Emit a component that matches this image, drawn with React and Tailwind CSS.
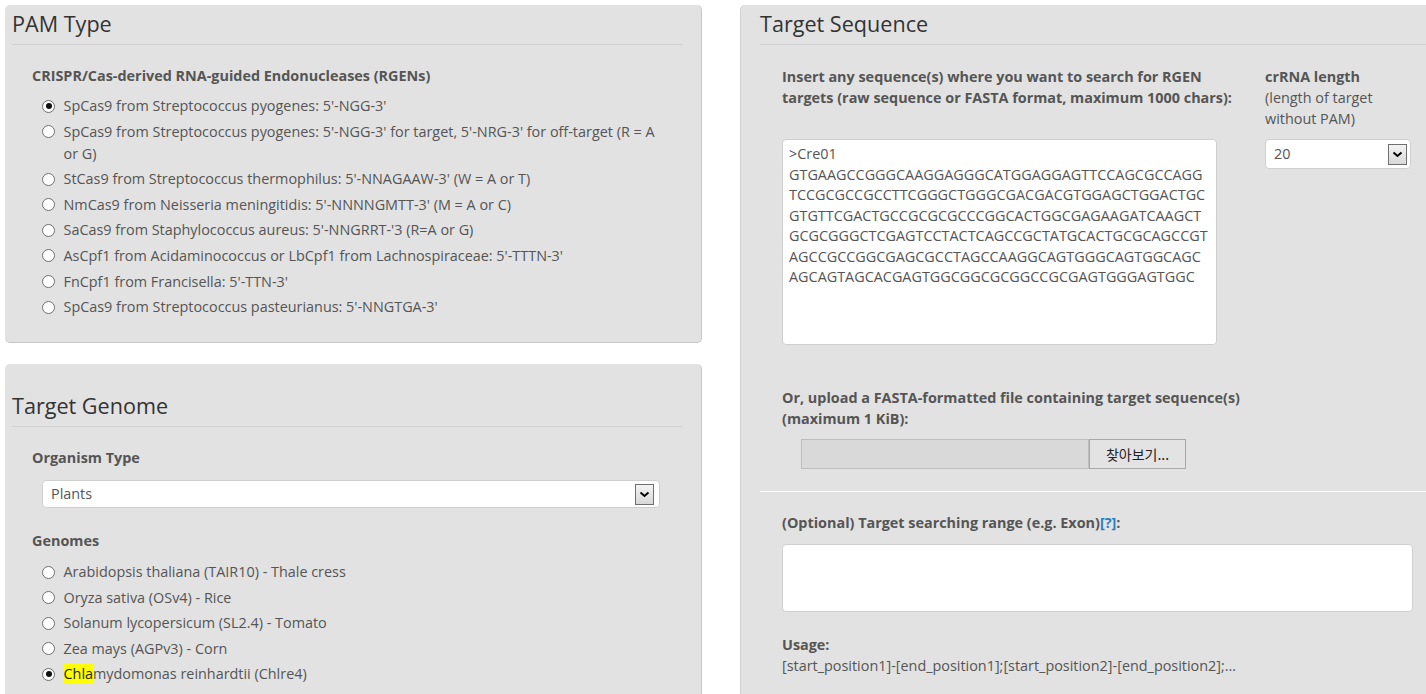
import React from "react";

const pamTypes = [
  { label: "SpCas9 from Streptococcus pyogenes: 5'-NGG-3'", checked: true },
  {
    label: "SpCas9 from Streptococcus pyogenes: 5'-NGG-3' for target, 5'-NRG-3' for off-target (R = A",
    more: "or G)",
  },
  { label: "StCas9 from Streptococcus thermophilus: 5'-NNAGAAW-3' (W = A or T)" },
  { label: "NmCas9 from Neisseria meningitidis: 5'-NNNNGMTT-3' (M = A or C)" },
  { label: "SaCas9 from Staphylococcus aureus: 5'-NNGRRT-'3 (R=A or G)" },
  { label: "AsCpf1 from Acidaminococcus or LbCpf1 from Lachnospiraceae: 5'-TTTN-3'" },
  { label: "FnCpf1 from Francisella: 5'-TTN-3'" },
  { label: "SpCas9 from Streptococcus pasteurianus: 5'-NNGTGA-3'" },
];

const genomes = [
  "Arabidopsis thaliana (TAIR10) - Thale cress",
  "Oryza sativa (OSv4) - Rice",
  "Solanum lycopersicum (SL2.4) - Tomato",
  "Zea mays (AGPv3) - Corn",
];

const sequence = [
  ">Cre01",
  "GTGAAGCCGGGCAAGGAGGGCATGGAGGAGTTCCAGCGCCAGG",
  "TCCGCGCCGCCTTCGGGCTGGGCGACGACGTGGAGCTGGACTGC",
  "GTGTTCGACTGCCGCGCGCCCGGCACTGGCGAGAAGATCAAGCT",
  "GCGCGGGCTCGAGTCCTACTCAGCCGCTATGCACTGCGCAGCCGT",
  "AGCCGCCGGCGAGCGCCTAGCCAAGGCAGTGGGCAGTGGCAGC",
  "AGCAGTAGCACGAGTGGCGGCGCGGCCGCGAGTGGGAGTGGC",
];

function Radio({ checked }) {
  return (
    <span className="mt-[4.5px] w-[13px] h-[13px] rounded-full border border-[#6f6f6f] bg-white flex items-center justify-center shrink-0">
      {checked && <span className="w-[6px] h-[6px] rounded-full bg-[#111]" />}
    </span>
  );
}

function Arrow() {
  return (
    <span className="w-[19px] h-[21px] border border-[#6f6f6f] bg-gradient-to-b from-[#f4f4f4] to-[#d8d8d8] flex items-center justify-center">
      <svg width="11" height="7" viewBox="0 0 11 7">
        <path d="M1.5 1.5 L5.5 5 L9.5 1.5" fill="none" stroke="#000" strokeWidth="2" />
      </svg>
    </span>
  );
}

function Heading({ children }) {
  return (
    <div className="text-[21.6px] leading-[26px] text-[#333] pb-[7px] border-b border-[#d2d2d2]">
      {children}
    </div>
  );
}

export default function App() {
  return (
    <div className="w-[1426px] h-[694px] overflow-hidden bg-white flex items-start pt-[5px] pl-[5px] font-['Open_Sans',sans-serif] text-[14.4px] text-[#555]">
      {/* left column */}
      <div className="w-[697px] flex flex-col shrink-0">
        <div className="h-[338px] bg-[#e2e2e2] rounded-[5px] border-r border-b border-[#c8c8c8] pl-[7px] pr-[19px] pt-[6px]">
          <Heading>PAM Type</Heading>
          <div className="pl-[20px] pt-[21px]">
            <div className="font-bold leading-[20px]">CRISPR/Cas-derived RNA-guided Endonucleases (RGENs)</div>
            <div className="pl-[10px] pt-[9px] flex flex-col gap-[3.6px]">
              {pamTypes.map((p) => (
                <div key={p.label} className="flex gap-[8.5px] leading-[22px]">
                  <Radio checked={p.checked} />
                  <div className="whitespace-nowrap">
                    {p.label}
                    {p.more && (
                      <>
                        <br />
                        {p.more}
                      </>
                    )}
                  </div>
                </div>
              ))}
            </div>
          </div>
        </div>

        <div className="mt-[21px] h-[360px] bg-[#e2e2e2] rounded-[5px] border-r border-[#c8c8c8] pl-[7px] pr-[19px] pt-[29px]">
          <Heading>Target Genome</Heading>
          <div className="pl-[20px] pt-[21px]">
            <div className="font-bold leading-[20px]">Organism Type</div>
            <div className="ml-[10px] mt-[12px] w-[618px] h-[28px] bg-white border border-[#cfcfcf] rounded-[4px] flex items-center justify-between pl-[8px] pr-[5px]">
              <span>Plants</span>
              <Arrow />
            </div>
            <div className="font-bold leading-[20px] mt-[23px]">Genomes</div>
            <div className="pl-[10px] pt-[10px] flex flex-col gap-[3.6px]">
              {genomes.map((g) => (
                <div key={g} className="flex gap-[8.5px] leading-[22px]">
                  <Radio />
                  <div className="whitespace-nowrap">{g}</div>
                </div>
              ))}
              <div className="flex gap-[8.5px] leading-[22px]">
                <Radio checked />
                <div className="whitespace-nowrap">
                  <span className="bg-[#ffff00] text-[#222]">Chla</span>mydomonas reinhardtii (Chlre4)
                </div>
              </div>
            </div>
          </div>
        </div>
      </div>

      {/* right column */}
      <div className="ml-[38px] flex-1 h-[720px] bg-[#e2e2e2] rounded-tl-[5px] border-l border-[#d0d0d0] pl-[19px] pt-[6px]">
        <Heading>Target Sequence</Heading>
        <div className="pl-[22px] pt-[21px]">
          <div className="flex">
            <div className="w-[463px]">
              <div className="font-bold leading-[21px] whitespace-nowrap">
                Insert any sequence(s) where you want to search for RGEN
                <br />
                targets (raw sequence or FASTA format, maximum 1000 chars):
              </div>
              <div className="mt-[31px] w-[435px] h-[206px] bg-white border border-[#cfcfcf] rounded-[4px] pl-[6px] pt-[4px] leading-[20.5px] whitespace-pre text-[#555]">
                {sequence.join("\n")}
              </div>
            </div>
            <div className="ml-[20px] w-[146px]">
              <div className="leading-[21px]">
                <span className="font-bold">crRNA length</span>
                <br />
                (length of target
                <br />
                without PAM)
              </div>
              <div className="mt-[10px] h-[30px] bg-white border border-[#cfcfcf] rounded-[4px] flex items-center justify-between pl-[8px] pr-[3px]">
                <span>20</span>
                <Arrow />
              </div>
            </div>
          </div>

          <div className="mt-[42px] font-bold leading-[21px] whitespace-nowrap">
            Or, upload a FASTA-formatted file containing target sequence(s)
            <br />
            (maximum 1 KiB):
          </div>
          <div className="mt-[10px] ml-[19px] flex h-[30px] w-[385px]">
            <div className="w-[288px] bg-[#d9d9d9] border border-[#bdbdbd]" />
            <div className="flex-1 bg-[#e3e3e3] border border-[#a9a9a9] flex items-center justify-center text-[#222] font-['Noto_Sans_CJK_KR',sans-serif] text-[14px]">
              찾아보기...
            </div>
          </div>
        </div>

        <div className="mt-[22px] border-t border-white" />

        <div className="pl-[22px] pt-[21px]">
          <div className="font-bold leading-[20px]">
            (Optional) Target searching range (e.g. Exon)<span className="text-[#2a7fc1]">[?]</span>:
          </div>
          <div className="mt-[11px] w-[631px] h-[68px] bg-white border border-[#cfcfcf] rounded-[4px]" />
          <div className="mt-[22px] font-bold leading-[21px]">Usage:</div>
          <div className="leading-[21px]">[start_position1]-[end_position1];[start_position2]-[end_position2];...</div>
        </div>
      </div>
    </div>
  );
}
